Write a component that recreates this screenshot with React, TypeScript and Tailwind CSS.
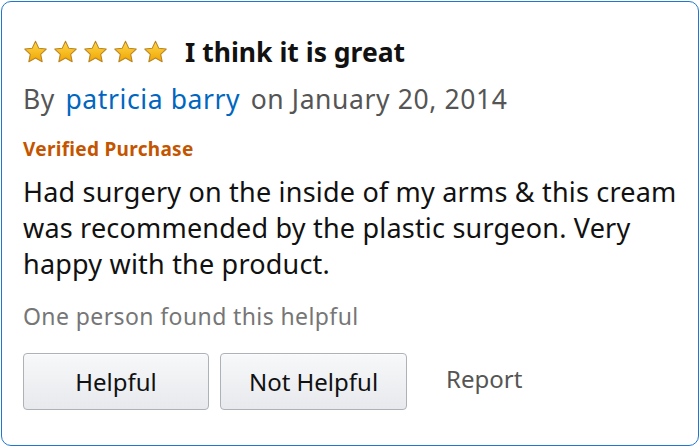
import { useId } from "react";

function Star() {
  const id = useId();
  return (
    <svg width="25" height="24" viewBox="0 0 24 23">
      <defs>
        <linearGradient id={id} x1="0" y1="0" x2="0" y2="1">
          <stop offset="0" stopColor="#ffd84a" />
          <stop offset="1" stopColor="#f0a400" />
        </linearGradient>
      </defs>
      <path
        d="M12 1.2l3.1 6.6 7.2.9-5.3 5 1.4 7.1L12 17.3l-6.4 3.5 1.4-7.1-5.3-5 7.2-.9z"
        fill={`url(#${id})`}
        stroke="#b98320"
        strokeWidth="1"
        strokeLinejoin="round"
      />
    </svg>
  );
}

function VoteButton({ label, width }: { label: string; width: string }) {
  return (
    <button
      type="button"
      className={`${width} h-[57px] rounded-[4px] border border-[#adb1b8] bg-gradient-to-b from-[#f7f8fa] to-[#e7e9ec] text-[24px] text-[#111] shadow-[0_1px_0_rgba(255,255,255,0.6)_inset]`}
    >
      {label}
    </button>
  );
}

export default function App() {
  return (
    <div className="h-[447px] w-[700px] bg-white p-[1px] font-['Noto_Sans',sans-serif]">
      <div className="h-full w-full rounded-[10px] border-[1.5px] border-[#1f78cf] px-[21px] pt-[34px]">
        <div className="flex items-center gap-[17px]">
          <div className="flex gap-[5px]">
            <Star />
            <Star />
            <Star />
            <Star />
            <Star />
          </div>
          <h1 className="text-[26.5px] leading-[32px] font-bold text-[#111]">I think it is great</h1>
        </div>

        <p className="mt-[15px] text-[26.5px] leading-[32px] tracking-[0.6px] text-[#555]">
          By <span className="mx-[3px] text-[#0066c0]">patricia barry</span> on January 20, 2014
        </p>

        <p className="mt-[22px] text-[19px] leading-[24px] font-bold tracking-[0.3px] text-[#c45500]">Verified Purchase</p>

        <p className="mt-[13px] text-[27px] leading-[36px] tracking-[0.2px] text-[#111]">
          Had surgery on the inside of my arms &amp; this cream was recommended by the plastic surgeon. Very happy with the product.
        </p>

        <p className="mt-[19px] text-[23px] leading-[30px] tracking-[0.4px] text-[#767676]">One person found this helpful</p>

        <div className="mt-[22px] flex items-center">
          <VoteButton label="Helpful" width="w-[186px]" />
          <div className="w-[11px]" />
          <VoteButton label="Not Helpful" width="w-[187px]" />
          <span className="ml-[39px] -mt-[6px] text-[24px] text-[#555]">Report</span>
        </div>
      </div>
    </div>
  );
}
